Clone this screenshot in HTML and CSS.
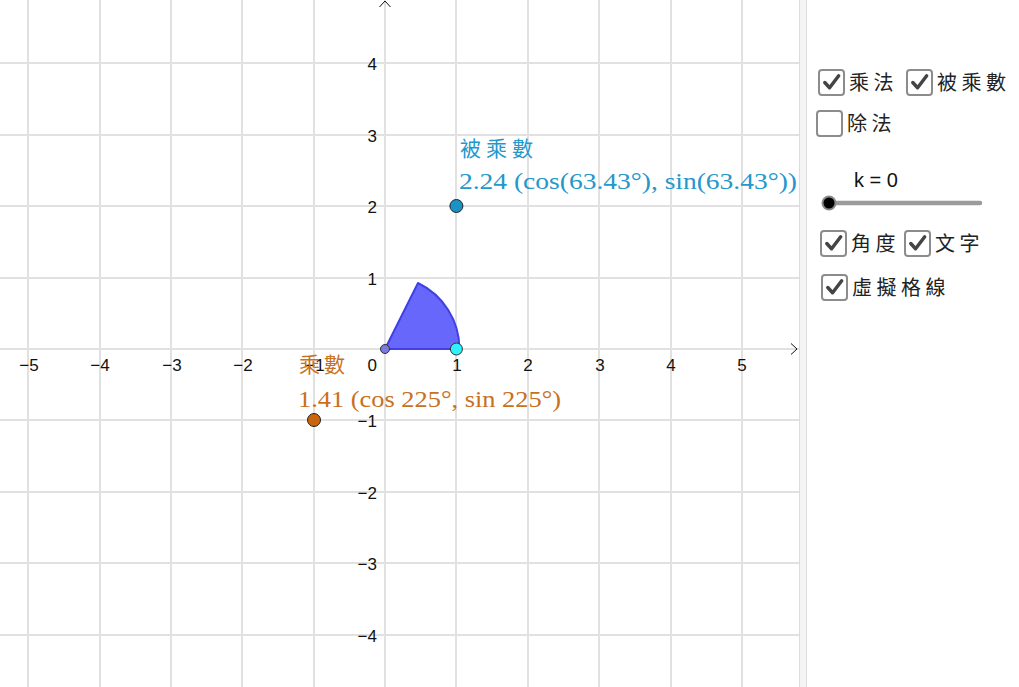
FILE: index.html
```html
<!DOCTYPE html>
<html>
<head>
<meta charset="utf-8">
<link rel="stylesheet" href="styles.css">
</head>
<body>
<div class="app">
  <div class="graphics">
    <svg class="plot" width="799" height="687" viewBox="0 0 799 687" xmlns="http://www.w3.org/2000/svg">
      <g stroke="#e1e1e1" stroke-width="2">
        <line x1="28" y1="0" x2="28" y2="687"/>
        <line x1="100" y1="0" x2="100" y2="687"/>
        <line x1="171" y1="0" x2="171" y2="687"/>
        <line x1="242" y1="0" x2="242" y2="687"/>
        <line x1="314" y1="0" x2="314" y2="687"/>
        <line x1="385" y1="0" x2="385" y2="687"/>
        <line x1="456" y1="0" x2="456" y2="687"/>
        <line x1="528" y1="0" x2="528" y2="687"/>
        <line x1="599" y1="0" x2="599" y2="687"/>
        <line x1="671" y1="0" x2="671" y2="687"/>
        <line x1="742" y1="0" x2="742" y2="687"/>
        <line x1="0" y1="63" x2="799" y2="63"/>
        <line x1="0" y1="135" x2="799" y2="135"/>
        <line x1="0" y1="206" x2="799" y2="206"/>
        <line x1="0" y1="278" x2="799" y2="278"/>
        <line x1="0" y1="349" x2="799" y2="349"/>
        <line x1="0" y1="420" x2="799" y2="420"/>
        <line x1="0" y1="492" x2="799" y2="492"/>
        <line x1="0" y1="563" x2="799" y2="563"/>
        <line x1="0" y1="635" x2="799" y2="635"/>
        <line x1="0" y1="706" x2="799" y2="706"/>
      </g>
      <g fill="none" stroke="#111" stroke-width="1">
        <polyline points="379.5,7 385,1 390.5,7"/>
        <polyline points="791,343.5 797,349 791,354.5"/>
      </g>
      <g class="tick" font-family="'Liberation Sans', Arial, sans-serif" font-size="17" fill="#111" text-anchor="middle">
        <text x="29" y="371">−5</text>
        <text x="100" y="371">−4</text>
        <text x="172" y="371">−3</text>
        <text x="243" y="371">−2</text>
        <text x="315" y="371">−1</text>
        <text x="457" y="371">1</text>
        <text x="528" y="371">2</text>
        <text x="600" y="371">3</text>
        <text x="671" y="371">4</text>
        <text x="742" y="371">5</text>
      </g>
      <g font-family="'Liberation Sans', Arial, sans-serif" font-size="17" fill="#111" text-anchor="end">
        <text x="377" y="371">0</text>
        <text x="377" y="70">4</text>
        <text x="377" y="142">3</text>
        <text x="377" y="213">2</text>
        <text x="377" y="285">1</text>
        <text x="377" y="427">−1</text>
        <text x="377" y="499">−2</text>
        <text x="377" y="570">−3</text>
        <text x="377" y="642">−4</text>
      </g>
      <path d="M385,349 L418,283 A73.5,73.5 0 0 1 459.5,349 Z" fill="#6767fb" stroke="#4040e6" stroke-width="2" stroke-linejoin="round"/>
      <circle cx="385" cy="349" r="4.5" fill="#7a7ae0" stroke="#333" stroke-width="1"/>
      <circle cx="456.4" cy="349" r="6" fill="#2ff0ff" stroke="#333" stroke-width="1"/>
      <circle cx="456.4" cy="206" r="6.5" fill="#1a92c6" stroke="#222" stroke-width="1"/>
      <circle cx="314" cy="420" r="6.5" fill="#c8650d" stroke="#222" stroke-width="1"/>
      <g fill="#2497cb">
        <text x="460" y="156" font-family="'Noto Sans CJK TC', sans-serif" font-size="21" letter-spacing="5">被乘數</text>
        <text x="459" y="189" font-family="'Liberation Serif', 'DejaVu Serif', serif" font-size="23" textLength="338" lengthAdjust="spacingAndGlyphs">2.24 (cos(63.43°), sin(63.43°))</text>
      </g>
      <g fill="#c8701e">
        <text x="299" y="372" font-family="'Noto Sans CJK TC', sans-serif" font-size="21" letter-spacing="4">乘數</text>
        <text x="298" y="407" font-family="'Liberation Serif', 'DejaVu Serif', serif" font-size="23" textLength="263" lengthAdjust="spacingAndGlyphs">1.41 (cos 225°, sin 225°)</text>
      </g>
    </svg>
  </div>
  <div class="divider"></div>
  <div class="panel">
    <div class="row row1">
      <label class="item"><span class="cb on"><svg viewBox="0 0 24 24" width="24" height="24"><path d="M5 12.5 L10 18 L19.5 5.5" fill="none" stroke="#444" stroke-width="3.6" stroke-linecap="round" stroke-linejoin="round"/></svg></span><span class="txt">乘法</span></label>
      <label class="item"><span class="cb on"><svg viewBox="0 0 24 24" width="24" height="24"><path d="M5 12.5 L10 18 L19.5 5.5" fill="none" stroke="#444" stroke-width="3.6" stroke-linecap="round" stroke-linejoin="round"/></svg></span><span class="txt">被乘數</span></label>
    </div>
    <div class="row row2">
      <label class="item"><span class="cb"></span><span class="txt">除法</span></label>
    </div>
    <div class="slider-block">
      <div class="slabel">k = 0</div>
      <svg class="slider" width="164" height="18" viewBox="0 0 164 18">
        <line x1="8" y1="9" x2="160" y2="9" stroke="#9b9b9b" stroke-width="4.5" stroke-linecap="round"/>
        <circle cx="9" cy="9" r="7.5" fill="#888"/>
        <circle cx="9" cy="9" r="5.5" fill="#000"/>
      </svg>
    </div>
    <div class="row row3">
      <label class="item"><span class="cb on"><svg viewBox="0 0 24 24" width="24" height="24"><path d="M5 12.5 L10 18 L19.5 5.5" fill="none" stroke="#444" stroke-width="3.6" stroke-linecap="round" stroke-linejoin="round"/></svg></span><span class="txt">角度</span></label>
      <label class="item"><span class="cb on"><svg viewBox="0 0 24 24" width="24" height="24"><path d="M5 12.5 L10 18 L19.5 5.5" fill="none" stroke="#444" stroke-width="3.6" stroke-linecap="round" stroke-linejoin="round"/></svg></span><span class="txt">文字</span></label>
    </div>
    <div class="row row4">
      <label class="item"><span class="cb on"><svg viewBox="0 0 24 24" width="24" height="24"><path d="M5 12.5 L10 18 L19.5 5.5" fill="none" stroke="#444" stroke-width="3.6" stroke-linecap="round" stroke-linejoin="round"/></svg></span><span class="txt">虛擬格線</span></label>
    </div>
  </div>
</div>
</body>
</html>
```

FILE: styles.css
```css
html, body {
  margin: 0;
  padding: 0;
  background: #fff;
  overflow: hidden;
}
.app {
  display: flex;
  width: 1019px;
  height: 687px;
}
.graphics {
  width: 799px;
  height: 687px;
  flex: none;
}
.plot {
  display: block;
}
.divider {
  width: 6px;
  flex: none;
  background: #f4f4f4;
  border-left: 1px solid #dcdcdc;
  border-right: 1px solid #dcdcdc;
}
.panel {
  flex: 1;
  display: flex;
  flex-direction: column;
  padding-left: 11px;
  padding-top: 68px;
  font-family: "Noto Sans CJK TC", "Noto Sans", sans-serif;
  color: #222;
}
.row {
  display: flex;
  align-items: center;
  height: 28px;
}
.item {
  display: flex;
  align-items: center;
}
.cb {
  width: 27px;
  height: 27px;
  box-sizing: border-box;
  border: 2px solid #8c8c8c;
  border-radius: 4px;
  display: flex;
  align-items: center;
  justify-content: center;
  background: #fff;
}
.cb svg {
  display: block;
}
.txt {
  font-size: 20px;
  line-height: 28px;
  letter-spacing: 4.5px;
  margin-left: 4px;
}
.row1 .item + .item {
  margin-left: 8px;
}
.row2 {
  margin-top: 13px;
  margin-left: -2px;
}
.slider-block {
  margin-top: 31px;
  display: flex;
  flex-direction: column;
}
.slabel {
  font-family: "Liberation Sans", Arial, sans-serif;
  font-size: 20px;
  line-height: 24px;
  margin-left: 36px;
  color: #111;
}
.slider {
  display: block;
  margin-top: 2px;
  margin-left: 2px;
}
.row3 {
  margin-top: 17px;
  margin-left: 2px;
}
.row3 .item + .item {
  margin-left: 4px;
}
.row4 {
  margin-top: 16px;
  margin-left: 3px;
}
```
